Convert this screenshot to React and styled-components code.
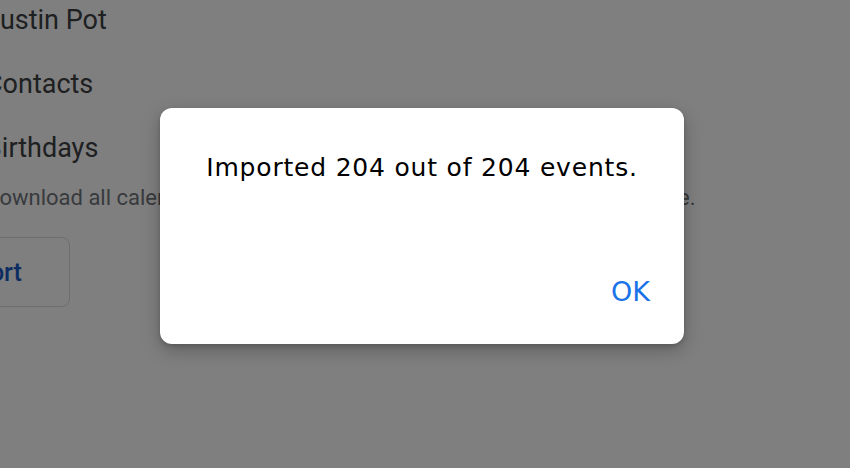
import React from 'react'
import styled, {createGlobalStyle} from 'styled-components'

const GlobalStyle = createGlobalStyle`
  html, body {
    margin: 0;
    padding: 0;
    background: #ffffff;
    overflow: hidden;
  }
  body {
    font-family: Roboto, "Liberation Sans", sans-serif;
  }
`

const Page = styled.div`
  width: 850px;
  height: 468px;
  overflow: hidden;
  position: relative;
`

const Column = styled.div`
  display: flex;
  flex-direction: column;
  margin-left: -15px;
  padding-top: 3px;
`

const Heading = styled.div`
  font-size: 27px;
  line-height: 34px;
  color: #3c4043;
  margin-bottom: ${p => p.gap || 30}px;
  white-space: nowrap;
`

const Description = styled.div`
  font-size: 22px;
  line-height: 30px;
  color: #70757a;
  white-space: nowrap;
  margin-bottom: 24px;
`

const OutlineButton = styled.button`
  align-self: flex-start;
  margin-left: -86px;
  height: 70px;
  padding: 0 47px;
  border: 1.5px solid #dadce0;
  border-radius: 8px;
  background: #fff;
  color: #1a5bc4;
  font-family: Roboto, "Liberation Sans", sans-serif;
  font-size: 25px;
  font-weight: 500;
`

const Scrim = styled.div`
  position: absolute;
  inset: 0;
  background: rgba(0, 0, 0, 0.5);
  display: flex;
  align-items: flex-start;
  justify-content: flex-start;
  padding: 108px 0 0 160px;
`

const Dialog = styled.div`
  width: 524px;
  height: 236px;
  box-sizing: border-box;
  background: #fff;
  border-radius: 12px;
  box-shadow: 0 6px 18px rgba(0, 0, 0, 0.25), 0 2px 4px rgba(0, 0, 0, 0.15);
  display: flex;
  flex-direction: column;
  padding: 44px 24px 0 24px;
`

const Message = styled.div`
  font-family: "DejaVu Sans", "Noto Sans", sans-serif;
  font-size: 25px;
  letter-spacing: 0.8px;
  line-height: 32px;
  color: #000;
  text-align: center;
  white-space: nowrap;
`

const Actions = styled.div`
  margin-top: auto;
  margin-bottom: 36px;
  padding-right: 10px;
  display: flex;
  justify-content: flex-end;
`

const TextButton = styled.button`
  border: none;
  background: none;
  padding: 0;
  color: #1a73e8;
  font-family: "DejaVu Sans", "Noto Sans", sans-serif;
  font-size: 27px;
  line-height: 32px;
`

export default function App() {
  return (
    <Page>
      <GlobalStyle />
      <Column>
        <Heading>Justin Pot</Heading>
        <Heading>Contacts</Heading>
        <Heading gap={18}>Birthdays</Heading>
        <Description>
          Download all calendar events from Birthdays as a single .ics file to share.
        </Description>
        <OutlineButton>Import</OutlineButton>
      </Column>
      <Scrim>
        <Dialog>
          <Message>Imported 204 out of 204 events.</Message>
          <Actions>
            <TextButton>OK</TextButton>
          </Actions>
        </Dialog>
      </Scrim>
    </Page>
  )
}
